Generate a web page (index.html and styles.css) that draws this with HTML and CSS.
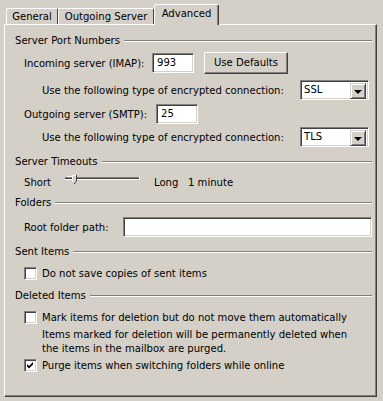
FILE: index.html
```html
<!DOCTYPE html>
<html lang="en">

<head>
    <meta charset="UTF-8" />
    <title>Account Settings - Advanced</title>
    <link rel="stylesheet" href="styles.css">
</head>

<body>
    <div class="tabs">
        <div class="tab tab-general">General</div>
        <div class="tab tab-outgoing">Outgoing Server</div>
        <div class="tab active">Advanced</div>
    </div>

    <div class="panel">
        <div class="heading">Server Port Numbers</div>

        <div class="row row-incoming">
            <span class="label label-incoming">Incoming server (IMAP):</span>
            <div class="textbox port">993</div>
            <div class="button">Use Defaults</div>
        </div>

        <div class="row row-enc1">
            <span class="label label-enc">Use the following type of encrypted connection:</span>
            <div class="select">
                <span class="select-value">SSL</span>
                <span class="select-btn"><span class="arrow"></span></span>
            </div>
        </div>

        <div class="row row-outgoing">
            <span class="label label-outgoing">Outgoing server (SMTP):</span>
            <div class="textbox port">25</div>
        </div>

        <div class="row row-enc2">
            <span class="label label-enc">Use the following type of encrypted connection:</span>
            <div class="select">
                <span class="select-value">TLS</span>
                <span class="select-btn"><span class="arrow"></span></span>
            </div>
        </div>

        <div class="heading h-timeouts">Server Timeouts</div>

        <div class="row row-slider">
            <span class="label label-short">Short</span>
            <svg class="slider" width="76" height="12" viewBox="0 0 76 12">
                <rect x="0" y="2" width="75" height="1" fill="#808080" />
                <rect x="0" y="3" width="75" height="1" fill="#404040" />
                <rect x="0" y="4" width="75" height="1" fill="#ffffff" />
                <rect x="74" y="2" width="1" height="3" fill="#ffffff" />
                <path d="M7 0 H11 V6 L9 8 L7 6 Z" fill="#d4d0c8" />
                <path d="M7.5 7 V0.5 H11" fill="none" stroke="#ffffff" stroke-width="1" />
                <path d="M11.5 0 V6.5 L9 9" fill="none" stroke="#404040" stroke-width="1" />
                <rect x="2" y="1" width="5" height="1" fill="#ffffff" />
            </svg>
            <span class="label label-long">Long</span>
            <span class="label">1 minute</span>
        </div>

        <div class="heading h-folders">Folders</div>

        <div class="row row-root">
            <span class="label label-root">Root folder path:</span>
            <div class="textbox root-path"></div>
        </div>

        <div class="heading h-sent">Sent Items</div>

        <div class="check row-sent">
            <span class="box"></span>
            <span>Do not save copies of sent items</span>
        </div>

        <div class="heading h-deleted">Deleted Items</div>

        <div class="check row-mark">
            <span class="box"></span>
            <span>Mark items for deletion but do not move them automatically</span>
        </div>

        <p class="note">Items marked for deletion will be permanently deleted when<br>the items in the mailbox are purged.</p>

        <div class="check row-purge">
            <span class="box">
                <svg width="9" height="9" viewBox="0 0 9 9">
                    <path d="M1 3 L3 5 L7 1 V3.5 L3 7.5 L1 5.5 Z" fill="#000" />
                </svg>
            </span>
            <span>Purge items when switching folders while online</span>
        </div>
    </div>
</body>

</html>
```

FILE: styles.css
```css
body {
    margin: 0;
    width: 383px;
    height: 401px;
    background-color: #d4d0c8;
    font-family: "DejaVu Sans Condensed", "DejaVu Sans", sans-serif;
    font-size: 11.2px;
    color: #000;
    overflow: hidden;
}

/* Tabs */

.tabs {
    display: flex;
    align-items: flex-end;
    height: 24px;
    padding-left: 6px;
    position: relative;
    z-index: 1;
}

.tab {
    height: 16px;
    line-height: 15px;
    box-sizing: border-box;
    text-align: center;
    white-space: nowrap;
    border-top: 1px solid #fff;
    border-left: 1px solid #fff;
    border-right: 1px solid #404040;
    border-radius: 2px 2px 0 0;
}

.tab-general {
    width: 52px;
}

.tab-outgoing {
    width: 96px;
}

.tab.active {
    width: 65px;
    height: 21px;
    line-height: 18px;
    background-color: #d4d0c8;
    margin-bottom: -1px;
    box-shadow: inset -1px 0 0 #808080;
}

/* Panel */

.panel {
    margin-left: 4px;
    width: 373px;
    height: 373px;
    box-sizing: border-box;
    border-top: 1px solid #fff;
    border-left: 1px solid #fff;
    border-right: 1px solid #404040;
    border-bottom: 1px solid #404040;
    box-shadow: inset -1px -1px 0 #808080;
    padding: 9px 0 0 10px;
}

.heading {
    display: flex;
    align-items: center;
    height: 14px;
    line-height: 14px;
    margin-right: 4px;
}

.heading::after {
    content: "";
    flex: 1;
    margin-left: 4px;
    border-top: 1px solid #808080;
    border-bottom: 1px solid #fff;
}

.h-timeouts {
    margin-top: 8px;
}

.h-folders {
    margin-top: 4px;
}

.h-sent {
    margin-top: 8px;
}

.h-deleted {
    margin-top: 9px;
}

.row {
    display: flex;
    align-items: center;
    padding-left: 9px;
}

.row-incoming {
    height: 22px;
    margin-top: 4px;
}

.row-enc1 {
    height: 20px;
    margin-top: 6px;
    padding-left: 27px;
}

.row-outgoing {
    height: 20px;
    margin-top: 4px;
}

.row-enc2 {
    height: 20px;
    margin-top: 3px;
    padding-left: 27px;
}

.row-slider {
    height: 20px;
    margin-top: 3px;
}

.row-root {
    height: 20px;
    margin-top: 7px;
}

.label {
    white-space: nowrap;
}

.label-incoming {
    width: 128px;
}

.label-outgoing {
    width: 132px;
}

.label-enc {
    width: 258px;
}

.label-short {
    width: 41px;
}

.label-long {
    width: 34px;
    margin-left: 13px;
}

.label-root {
    width: 99px;
}

/* Controls */

.textbox,
.select {
    height: 20px;
    box-sizing: border-box;
    background-color: #fff;
    border-top: 1px solid #808080;
    border-left: 1px solid #808080;
    border-right: 1px solid #fff;
    border-bottom: 1px solid #fff;
    box-shadow: inset 1px 1px 0 #404040, inset -1px -1px 0 #d4d0c8;
    padding: 0 4px;
    line-height: 18px;
}

.port {
    width: 42px;
}

.root-path {
    width: 249px;
}

.button {
    width: 84px;
    height: 22px;
    margin-left: 10px;
    box-sizing: border-box;
    text-align: center;
    line-height: 19px;
    border-top: 1px solid #fff;
    border-left: 1px solid #fff;
    border-right: 1px solid #404040;
    border-bottom: 1px solid #404040;
    box-shadow: inset -1px -1px 0 #808080;
}

.select {
    display: flex;
    width: 69px;
    padding: 2px;
}

.select-value {
    flex: 1;
    line-height: 14px;
    padding-left: 1px;
}

.select-btn {
    width: 16px;
    height: 16px;
    box-sizing: border-box;
    background-color: #d4d0c8;
    border-top: 1px solid #d4d0c8;
    border-left: 1px solid #d4d0c8;
    border-right: 1px solid #404040;
    border-bottom: 1px solid #404040;
    box-shadow: inset 1px 1px 0 #fff, inset -1px -1px 0 #808080;
    display: flex;
    align-items: center;
    justify-content: center;
}

.arrow {
    width: 0;
    height: 0;
    border-left: 4px solid transparent;
    border-right: 4px solid transparent;
    border-top: 4px solid #000;
    margin-top: 1px;
}

.slider {
    margin-top: -2px;
}

/* Checkboxes */

.check {
    display: flex;
    align-items: center;
    height: 14px;
    padding-left: 9px;
}

.row-sent {
    margin-top: 7px;
}

.row-mark {
    margin-top: 7px;
}

.row-purge {
    margin-top: 2px;
}

.box {
    width: 13px;
    height: 13px;
    box-sizing: border-box;
    margin-right: 5px;
    background-color: #fff;
    border-top: 1px solid #808080;
    border-left: 1px solid #808080;
    border-right: 1px solid #fff;
    border-bottom: 1px solid #fff;
    box-shadow: inset 1px 1px 0 #404040, inset -1px -1px 0 #d4d0c8;
    display: flex;
    align-items: center;
    justify-content: center;
}

.note {
    margin: 4px 0 0 27px;
    line-height: 14px;
    white-space: nowrap;
}
```
